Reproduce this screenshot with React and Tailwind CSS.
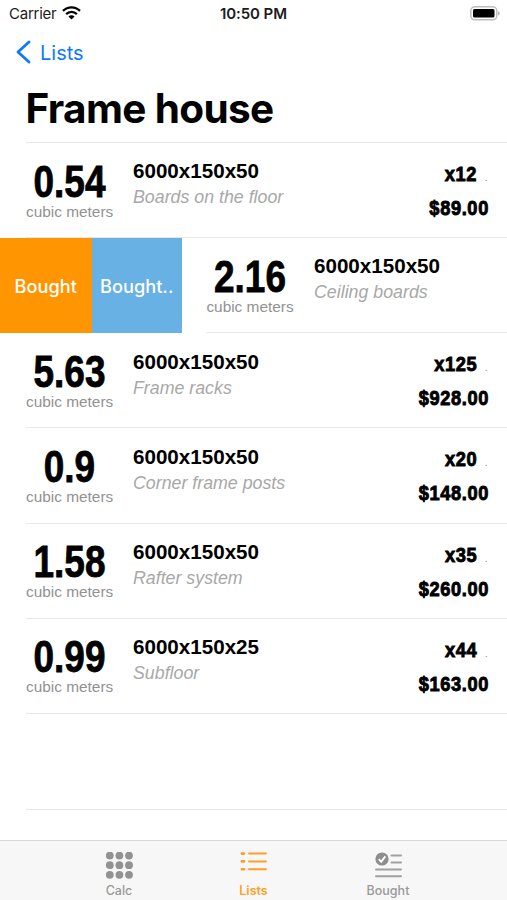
import React from 'react';

const items = [
  { volume: '0.54', size: '6000x150x50', name: 'Boards on the floor', count: 'x12', price: '$89.00' },
  { volume: '2.16', size: '6000x150x50', name: 'Ceiling boards', swiped: true },
  { volume: '5.63', size: '6000x150x50', name: 'Frame racks', count: 'x125', price: '$928.00' },
  { volume: '0.9', size: '6000x150x50', name: 'Corner frame posts', count: 'x20', price: '$148.00' },
  { volume: '1.58', size: '6000x150x50', name: 'Rafter system', count: 'x35', price: '$260.00' },
  { volume: '0.99', size: '6000x150x25', name: 'Subfloor', count: 'x44', price: '$163.00' },
];

function StatusBar() {
  return (
    <div className="grid h-7 grid-cols-3 items-center pl-[9px] pr-[7px] text-[15px] leading-7 text-[#1c1c1c]">
      <div className="flex items-center gap-[6px]">
        <span className="tracking-[-0.25px]">Carrier</span>
        <svg className="mb-[2px]" width="19" height="14" viewBox="0 0 19 14" fill="none" stroke="#000" strokeWidth="2.3">
          <path d="M1 4.9C5.8 0.2 13.2 0.2 18 4.9" />
          <path d="M4.1 8.1C7.2 5.1 11.8 5.1 14.9 8.1" />
          <path d="M9.5 13.6L6.4 10.4C8.2 8.8 10.8 8.8 12.6 10.4Z" fill="#000" stroke="none" />
        </svg>
      </div>
      <span className="pr-[2px] text-center font-semibold tracking-[-0.1px] whitespace-nowrap">10:50 PM</span>
      <svg className="mb-[2px] justify-self-end" width="30" height="15" viewBox="0 0 30 15">
        <rect x="0.8" y="0.8" width="26" height="13" rx="4" fill="#fff" stroke="#bdbdbd" strokeWidth="1.5" />
        <rect x="3" y="3" width="21.5" height="8.6" rx="1.5" fill="#000" />
        <path d="M28.2 5.2C30.2 6 30.2 8.6 28.2 9.4Z" fill="#aaa" />
      </svg>
    </div>
  );
}

function Row({ item }) {
  return (
    <div className="flex min-h-0 flex-1">
      {item.swiped && (
        <div className="flex w-[182px] shrink-0 text-[18.2px] font-medium text-white">
          <div className="flex w-[91.5px] items-center justify-center bg-[#ff9500] pt-[2px]">Bought</div>
          <div className="flex flex-1 items-center justify-center bg-[#67b1e4] pt-[2px]">Bought..</div>
        </div>
      )}
      <div className={item.swiped ? 'ml-6 flex flex-1 border-b border-[#e8e8ea]' : 'ml-[26px] flex flex-1 border-b border-[#e8e8ea]'}>
        <div className={item.swiped ? "w-[88px] shrink-0 pt-[16.5px] text-center font-['Liberation_Sans',sans-serif]" : "w-[87px] shrink-0 pt-[16.5px] text-center font-['Liberation_Sans',sans-serif]"}>
          <p className="origin-center scale-x-[0.85] text-[43.5px] leading-[44px] font-bold [-webkit-text-stroke:0.8px_#000]">{item.volume}</p>
          <p className="text-[15.4px] leading-[16px] whitespace-nowrap text-[#929292]">cubic meters</p>
        </div>
        <div className="ml-5 pt-[16.3px] font-['Liberation_Sans',sans-serif] whitespace-nowrap">
          <p className="text-[20.6px] leading-6 font-bold">{item.size}</p>
          <p className="mt-[2px] text-[17.8px] leading-6 text-[#a8a8a8] italic">{item.name}</p>
        </div>
        {item.price && (
          <div className="mr-[18px] ml-auto origin-right scale-x-[0.89] pt-[19px] text-right font-['Liberation_Sans',sans-serif] text-[20.5px] leading-6 font-bold tracking-[0.7px] [-webkit-text-stroke:0.9px_#000]">
            <p className="flex h-6 items-baseline justify-end gap-[9px] pr-[2px]">
              {item.count}
              <span className="text-[8px] leading-none tracking-normal text-[#888] [-webkit-text-stroke:0]">.</span>
            </p>
            <p className="mt-[10px]">{item.price}</p>
          </div>
        )}
      </div>
    </div>
  );
}

function CalcIcon() {
  const at = [3.8, 13.4, 23];
  return (
    <svg width="27" height="27" viewBox="0 0 27 27" fill="#929292">
      {at.map((y) => at.map((x) => <circle key={`${x}-${y}`} cx={x} cy={y - 0.2} r="3.9" />))}
    </svg>
  );
}

function ListsIcon() {
  return (
    <svg width="27" height="27" viewBox="0 0 27 27" stroke="#ff9f24" strokeWidth="2" strokeLinecap="round">
      <path d="M1.8 1.6H4M1.8 9.4H4M1.8 17.2H4" strokeWidth="2.6" />
      <path d="M9 1.6H26M9 9.4H26M9 17.2H26" />
    </svg>
  );
}

function BoughtIcon() {
  return (
    <svg width="27" height="27" viewBox="0 0 27 27" fill="none" stroke="#a0a0a0" strokeWidth="2">
      <circle cx="7" cy="7" r="6.6" fill="#8e8e8e" stroke="none" />
      <path d="M3.8 7.2L6.2 9.8L10.3 4.4" stroke="#fff" strokeWidth="1.9" />
      <path d="M16.5 3.6H26M16.5 10.4H26M1 17.4H26M1 24.2H26" strokeLinecap="round" />
    </svg>
  );
}

export default function App() {
  return (
    <div className="flex h-[900px] w-[507px] flex-col overflow-hidden bg-white font-['Inter',sans-serif] text-black">
      <StatusBar />
      <div className="flex h-12 items-center gap-[9px] pl-4 text-[20px] text-[#0a7aff]">
        <svg width="15" height="24" viewBox="0 0 15 24" fill="none" stroke="currentColor" strokeWidth="2.8" strokeLinecap="round" strokeLinejoin="round">
          <path d="M13 2L2 12L13 22" />
        </svg>
        <span className="pt-px">Lists</span>
      </div>
      <div className="ml-[26px] h-[67px] border-b border-[#e8e8ea]">
        <h1 className="-ml-[0.5px] pt-[8px] text-[40.5px] leading-[50px] font-bold tracking-[-0.65px] whitespace-nowrap">Frame house</h1>
      </div>
      <div className="flex h-[667px] shrink-0 flex-col">
        {items.map((item) => <Row key={item.name} item={item} />)}
        {/* empty trailing cell */}
        <div className="ml-[26px] flex-1 border-b border-[#e8e8ea]" />
      </div>
      <div className="mt-auto flex h-[60px] shrink-0 justify-center border-t border-[#d9d9d9] bg-[#f7f7f7] text-[12.5px] leading-4 font-medium text-[#999]">
        <div className="flex w-[134.5px] flex-col items-center pt-[11px]">
          <CalcIcon />
          <span className="mt-[4px]">Calc</span>
        </div>
        <div className="flex w-[134.5px] flex-col items-center pt-[11px] text-[#ff9f24]">
          <ListsIcon />
          <span className="mt-[4px] font-semibold">Lists</span>
        </div>
        <div className="flex w-[134.5px] flex-col items-center pt-[11px]">
          <BoughtIcon />
          <span className="mt-[4px]">Bought</span>
        </div>
      </div>
    </div>
  );
}
